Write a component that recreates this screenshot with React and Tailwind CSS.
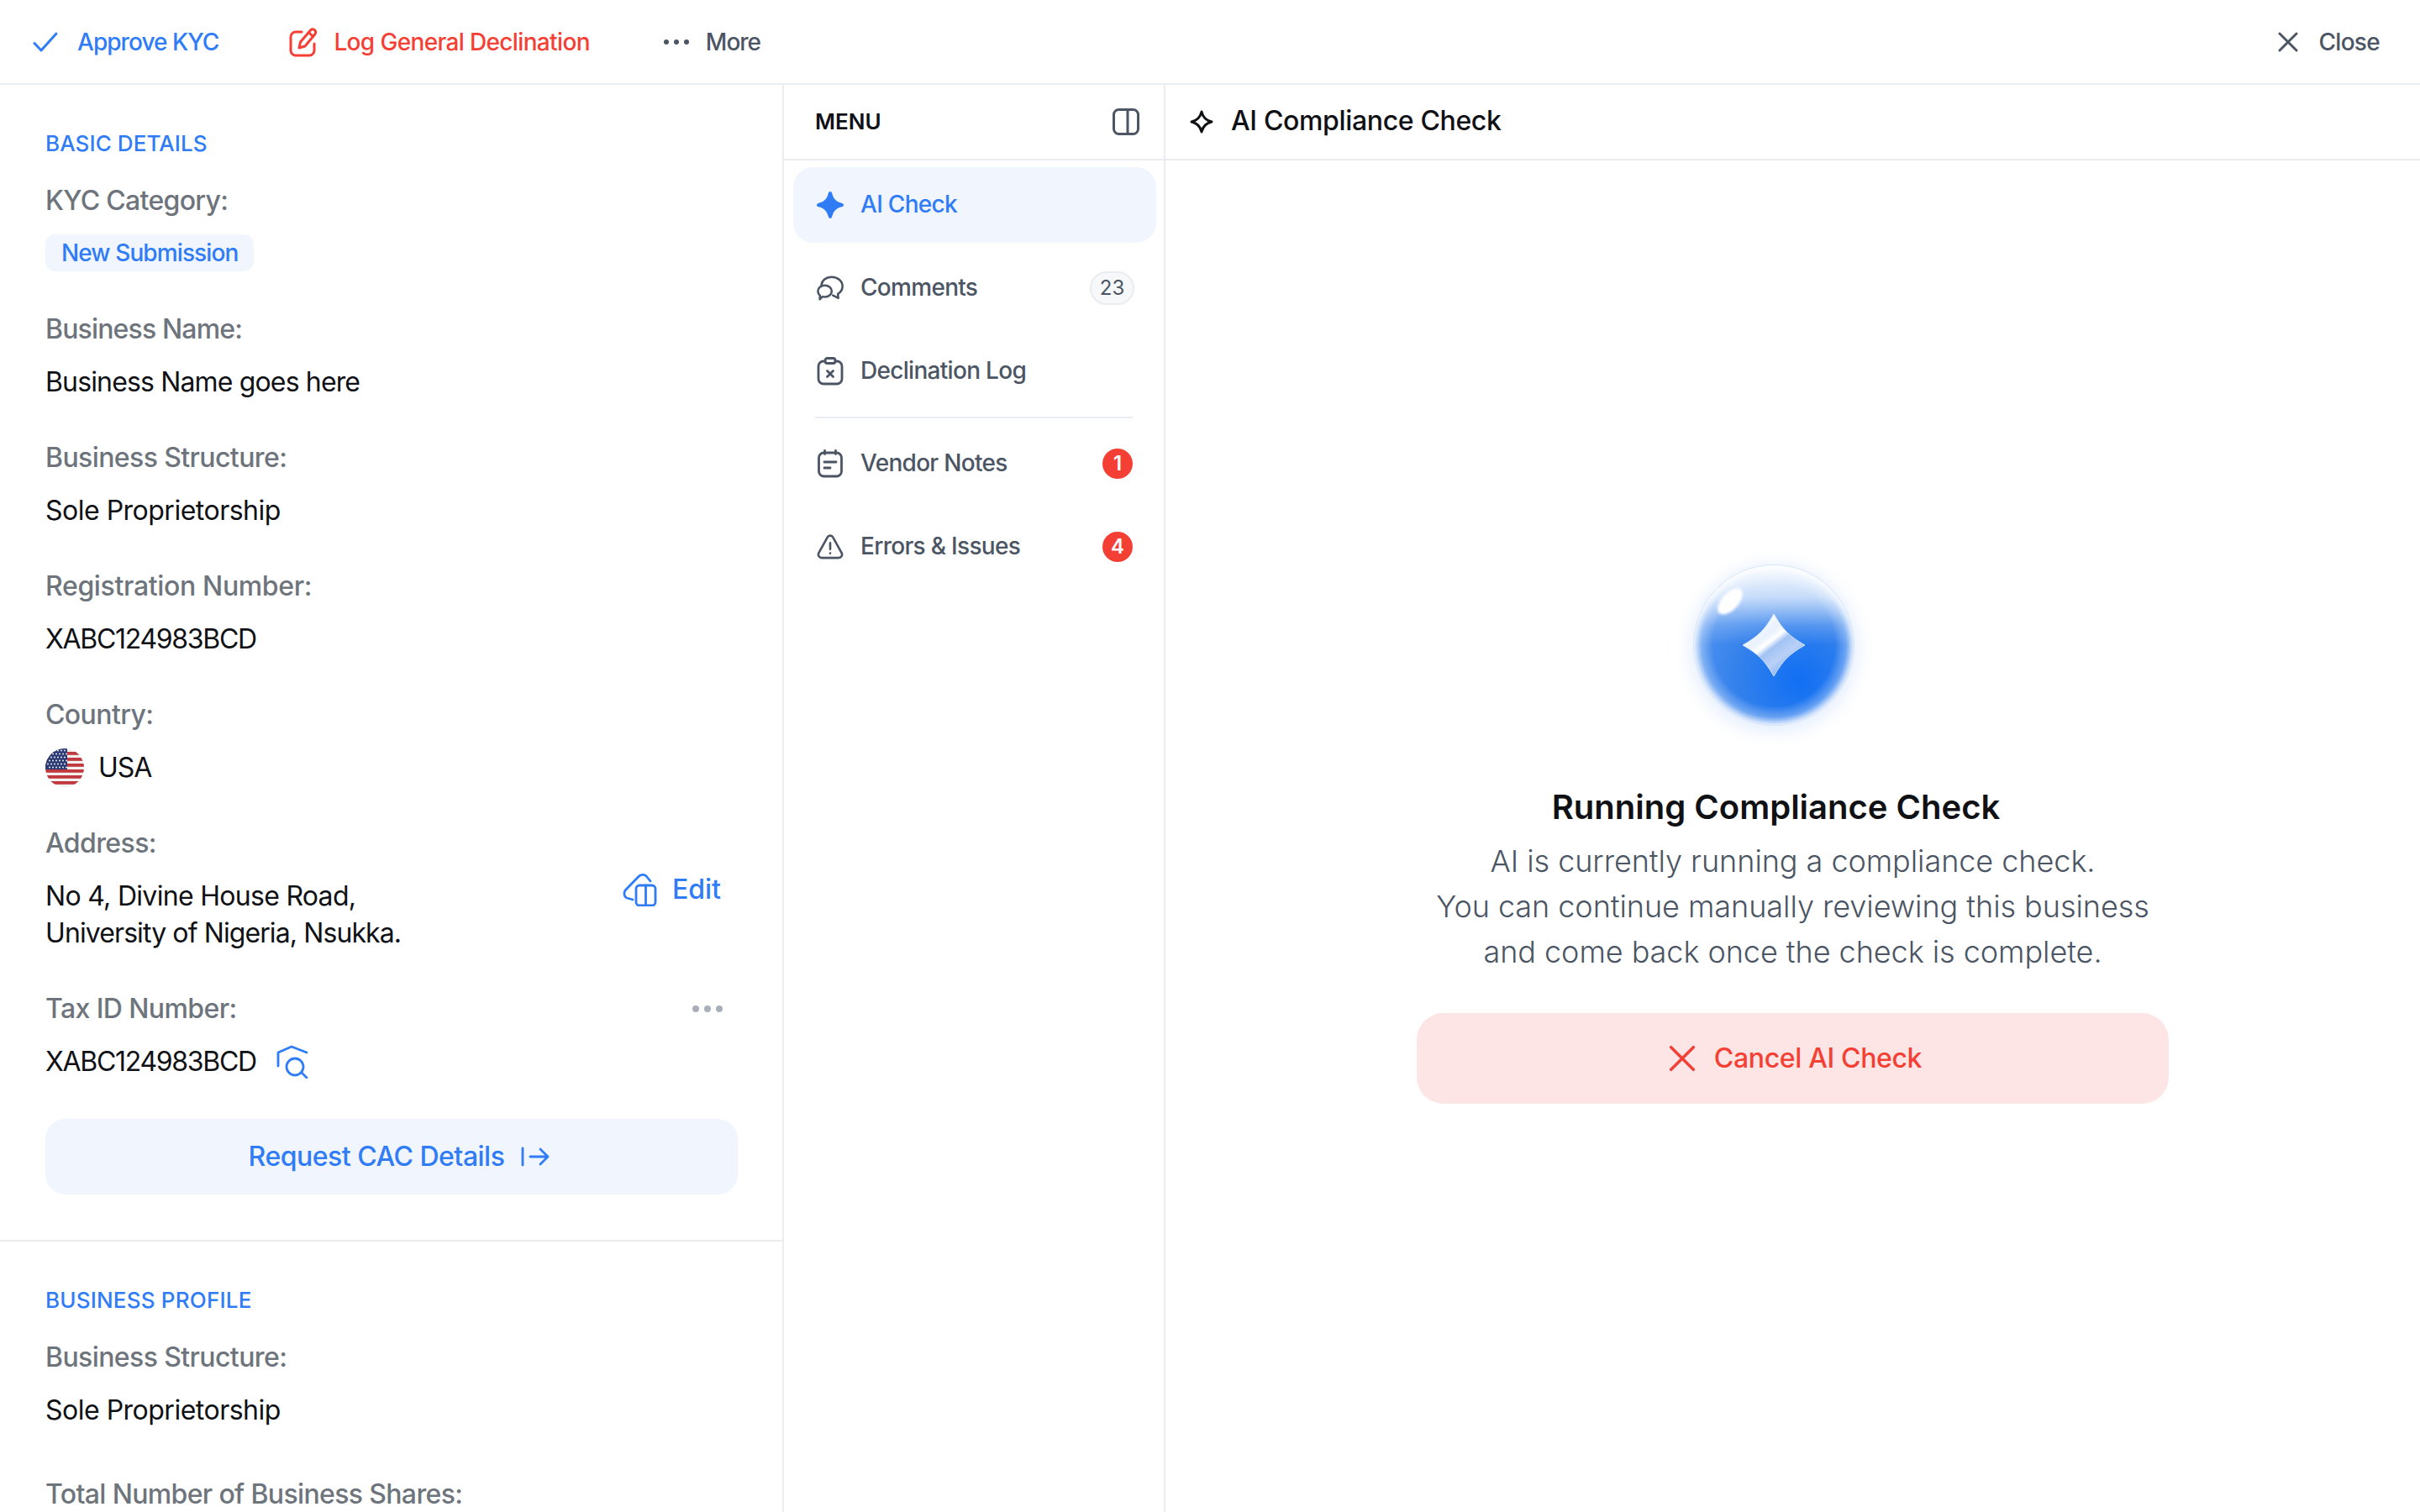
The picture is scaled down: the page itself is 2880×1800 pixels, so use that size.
import React from "react";

const rule = "border-[#e9edf2]";

function Check() {
  return (
    <svg width="32" height="32" viewBox="0 0 32 32" fill="none" stroke="#2f7cf6" strokeWidth="3" strokeLinecap="round" strokeLinejoin="round">
      <path d="M3 17.5 11 26 29 6" />
    </svg>
  );
}

function PenNote() {
  return (
    <svg width="34" height="36" viewBox="0 0 34 36" fill="none" stroke="#f43f35" strokeWidth="3" strokeLinecap="round" strokeLinejoin="round">
      <path d="M15 6H8a6 6 0 0 0-6 6v16a6 6 0 0 0 6 6h16a6 6 0 0 0 6-6v-8" />
      <path d="M26 3.5a3.6 3.6 0 0 1 5 5L19 23l-7 2 1.5-7z" />
      <path d="m23.5 6.5 5 5" />
    </svg>
  );
}

function Dots({ color = "#4b5563", size = 30, r = 3 }) {
  return (
    <svg width={size} height="10" viewBox={`0 0 ${size} 10`} fill={color}>
      <circle cx={r} cy="5" r={r} />
      <circle cx={size / 2} cy="5" r={r} />
      <circle cx={size - r} cy="5" r={r} />
    </svg>
  );
}

function Cross({ size = 24, color = "#4b5563", sw = 3 }) {
  return (
    <svg width={size} height={size} viewBox="0 0 24 24" fill="none" stroke={color} strokeWidth={sw} strokeLinecap="round">
      <path d="M2 2l20 20M22 2 2 22" />
    </svg>
  );
}

function PanelIcon() {
  return (
    <svg width="32" height="32" viewBox="0 0 32 32" fill="none" stroke="#4b5563" strokeWidth="3">
      <rect x="1.5" y="1.5" width="29" height="29" rx="6" />
      <path d="M18 2v28" />
    </svg>
  );
}

function Sparkle() {
  return (
    <svg width="32" height="32" viewBox="0 0 32 32" fill="#2f7cf6">
      <path d="M16 0c1.2 0 1.8.8 2.3 2.4 1.6 6.2 5 9.7 11.3 11.3C31.200 14.200 32 14.800 32 16s-.8 1.800-2.400 2.300c-6.300 1.600-9.700 5-11.300 11.300C17.800 31.200 17.200 32 16 32s-1.800-.8-2.300-2.400c-1.600-6.300-5-9.700-11.300-11.300C.8 17.800 0 17.200 0 16s.8-1.800 2.400-2.300c6.300-1.600 9.700-5.100 11.300-11.300C14.200.8 14.800 0 16 0z" />
    </svg>
  );
}

function Comments() {
  return (
    <svg width="35" height="34" viewBox="0 0 35 34" fill="none" stroke="#4b5563" strokeWidth="2.800" strokeLinecap="round" strokeLinejoin="round">
      <path d="M6 13.500C6.500 7 12 2.500 19.500 2.500 27.500 2.500 33.500 8 33.500 14.500c0 4-2 7.500-6 10l.5 5.500-7-3.500" />
      <path d="M10.500 13.500c5 0 9 3.400 9 7.500s-4 7.500-9 7.500c-1 0-2-.1-3-.4L4 31.500l.2-5C2.300 25 1.500 23 1.500 21c0-4.100 4-7.500 9-7.500z" />
    </svg>
  );
}

function ClipX() {
  return (
    <svg width="32" height="34" viewBox="0 0 32 34" fill="none" stroke="#4b5563" strokeWidth="2.800" strokeLinecap="round" strokeLinejoin="round">
      <path d="M10 5H8a6 6 0 0 0-6 6v15a6 6 0 0 0 6 6h16a6 6 0 0 0 6-6V11a6 6 0 0 0-6-6h-2" />
      <rect x="10" y="1.500" width="12" height="6" rx="2.500" />
      <path d="m12.500 16.500 7 7M19.500 16.500l-7 7" />
    </svg>
  );
}

function NotesIcon() {
  return (
    <svg width="32" height="34" viewBox="0 0 32 34" fill="none" stroke="#4b5563" strokeWidth="2.800" strokeLinecap="round" strokeLinejoin="round">
      <rect x="2.500" y="4" width="27" height="28" rx="6" />
      <path d="M9.500 1.500v4M22.500 1.500v4M9 15h14M9 22h7" />
    </svg>
  );
}

function AlertIcon() {
  return (
    <svg width="34" height="32" viewBox="0 0 34 32" fill="none" stroke="#4b5563" strokeWidth="2.800" strokeLinecap="round" strokeLinejoin="round">
      <path d="M13.500 4 2.600 23.500C1 26.500 3 30 6.400 30h21.200c3.400 0 5.400-3.500 3.800-6.500L20.500 4c-1.600-2.900-5.400-2.900-7 0z" />
      <path d="M17 11v8M17 24v.2" />
    </svg>
  );
}

function StarOutline() {
  return (
    <svg width="28" height="28" viewBox="0 0 28 28" fill="none" stroke="#0f1115" strokeWidth="3" strokeLinejoin="round">
      <path d="M14 2c1.500 6.500 5.500 10.500 12 12-6.500 1.500-10.500 5.500-12 12-1.500-6.500-5.500-10.500-12-12 6.500-1.500 10.500-5.500 12-12z" />
    </svg>
  );
}

function EditIcon() {
  return (
    <svg width="42" height="40" viewBox="0 0 42 40" fill="none" stroke="#2f7cf6" strokeWidth="2.800" strokeLinecap="round" strokeLinejoin="round">
      <path d="M12 32l-7-2C2 29 1 24 3 21L18 5.500C21 2 26 1 29 5l4 5" />
      <rect x="16" y="15" width="23" height="24" rx="4" />
      <path d="M27.500 15v24" />
    </svg>
  );
}

function TaxIcon() {
  return (
    <svg width="38" height="40" viewBox="0 0 38 40" fill="none" stroke="#2f7cf6" strokeWidth="2.800" strokeLinecap="round" strokeLinejoin="round">
      <path d="M2 25V9l16-7 18 7" />
      <circle cx="22" cy="26" r="10" />
      <path d="m30 33 6 6" />
    </svg>
  );
}

function ArrowIcon() {
  return (
    <svg width="34" height="26" viewBox="0 0 34 26" fill="none" stroke="#2f7cf6" strokeWidth="2.800" strokeLinecap="round" strokeLinejoin="round">
      <path d="M2 3v20M11 13h21M23 4l9 9-9 9" />
    </svg>
  );
}

function Flag() {
  const stars = [];
  for (let r = 0; r < 6; r++) {
    for (let c = 0; c < 6; c++) {
      stars.push(<circle key={`${r}-${c}`} cx={3 + c * 4 + (r % 2 ? 2 : 0)} cy={2.500 + r * 4} r="0.900" fill="#fff" />);
    }
  }
  return (
    <svg width="46" height="46" viewBox="0 0 46 46" className="shrink-0 -my-px">
      <defs>
        <clipPath id="flag-clip">
          <circle cx="23" cy="23" r="23" />
        </clipPath>
      </defs>
      <g clipPath="url(#flag-clip)">
        <rect width="46" height="46" fill="#f3f0f0" />
        {[3, 10, 17, 24, 31, 38].map((y) => (
          <rect key={y} x="0" y={y + 1} width="46" height="3.800" fill="#c0393f" />
        ))}
        <rect width="26" height="25" fill="#2b3a72" />
        {stars}
      </g>
    </svg>
  );
}

function Orb() {
  return (
    <svg width="320" height="320" viewBox="0 0 320 320">
      <defs>
        <radialGradient id="orb-base" cx="0.660" cy="0.720" r="0.800">
          <stop offset="0" stopColor="#116ff3" />
          <stop offset="0.500" stopColor="#3481ec" />
          <stop offset="1" stopColor="#5a9af0" />
        </radialGradient>
        <radialGradient id="orb-edge" cx="0.500" cy="0.500" r="0.500">
          <stop offset="0.760" stopColor="#fff" stopOpacity="0" />
          <stop offset="0.900" stopColor="#fff" stopOpacity="0.300" />
          <stop offset="1" stopColor="#fff" stopOpacity="0.900" />
        </radialGradient>
        <linearGradient id="orb-top" x1="0.500" y1="0" x2="0.500" y2="1">
          <stop offset="0" stopColor="#fff" stopOpacity="0.950" />
          <stop offset="0.200" stopColor="#fff" stopOpacity="0.700" />
          <stop offset="0.380" stopColor="#fff" stopOpacity="0.180" />
          <stop offset="0.500" stopColor="#fff" stopOpacity="0" />
        </linearGradient>
        <linearGradient id="orb-star" x1="0.150" y1="0.050" x2="0.850" y2="0.950">
          <stop offset="0" stopColor="#fff" />
          <stop offset="0.330" stopColor="#e9f1fe" />
          <stop offset="0.430" stopColor="#ffffff" />
          <stop offset="0.520" stopColor="#a3c3f5" />
          <stop offset="0.700" stopColor="#b9d1f7" />
          <stop offset="1" stopColor="#6f9fec" />
        </linearGradient>
        <filter id="orb-glow" x="-30%" y="-30%" width="160%" height="160%">
          <feGaussianBlur stdDeviation="10" />
        </filter>
        <filter id="orb-soft" x="-30%" y="-30%" width="160%" height="160%">
          <feGaussianBlur stdDeviation="1.500" />
        </filter>
      </defs>
      <circle cx="160" cy="164" r="100" fill="#2f7cf6" opacity="0.120" filter="url(#orb-glow)" />
      <circle cx="160" cy="160" r="95.500" fill="url(#orb-base)" />
      <circle cx="160" cy="160" r="95.500" fill="url(#orb-top)" />
      <circle cx="160" cy="160" r="95.500" fill="url(#orb-edge)" />
      <circle cx="160" cy="160" r="95.500" fill="none" stroke="#dbe8fb" strokeWidth="1" />
      <ellipse cx="108" cy="108" rx="19" ry="10" fill="#fff" transform="rotate(-47 108 108)" filter="url(#orb-soft)" />
      <path d="M160 123C171 142 178 149 197 160 178 171 171 178 160 197 149 178 142 171 123 160 142 149 149 142 160 123z" fill="url(#orb-star)" stroke="#e6effd" strokeWidth="0.800" />
    </svg>
  );
}

function Field({ label, children, right, track = "tracking-[-0.6px]" }) {
  return (
    <div className="flex flex-col gap-[19px]">
      <div className="flex items-center justify-between">
        <p className={`text-[32px] leading-[44px] font-medium text-[#6e747c] ${track}`}>{label}</p>
        {right}
      </div>
      {children}
    </div>
  );
}

function Value({ children, track = "tracking-[-0.7px]" }) {
  return <p className={`text-[32px] leading-[44px] text-[#0f1115] ${track}`}>{children}</p>;
}

function MenuItem({ icon, label, active, children }) {
  return (
    <div className={`h-[90px] pl-7 pr-7 flex items-center gap-5 rounded-[24px] ${active ? "bg-[#f0f5fe]" : ""}`}>
      <span className="w-8 flex justify-center shrink-0">{icon}</span>
      <span className={`flex-1 pb-[2px] text-[28px] font-medium tracking-[-0.7px] ${active ? "text-[#2f7cf6]" : "text-[#4b5563]"}`}>{label}</span>
      {children}
    </div>
  );
}

function RedBadge({ n }) {
  return (
    <span className="w-9 h-9 rounded-full bg-[#f43f35] text-white text-[24px] font-semibold flex items-center justify-center">{n}</span>
  );
}

export default function App() {
  return (
    <div className="w-full h-screen overflow-hidden bg-white flex flex-col font-[Inter,sans-serif]">
      <div className={`h-[101px] shrink-0 border-b-2 ${rule} flex items-center justify-between pl-[38px] pr-[48px]`}>
        <div className="flex items-center">
          <div className="flex items-center gap-[22px] text-[28px] font-medium text-[#2f7cf6] tracking-[-0.95px]">
            <Check />
            <span>Approve KYC</span>
          </div>
          <div className="ml-[84px] flex items-center gap-[19px] text-[28px] font-medium text-[#f43f35] tracking-[-0.65px]">
            <PenNote />
            <span>Log General Declination</span>
          </div>
          <div className="ml-[88px] flex items-center gap-5 text-[28px] font-medium text-[#4b5563] tracking-[-1px]">
            <Dots />
            <span>More</span>
          </div>
        </div>
        <div className="flex items-center gap-6 text-[28px] font-medium text-[#4b5563] tracking-[-0.7px]">
          <Cross />
          <span>Close</span>
        </div>
      </div>

      <div className="flex-1 flex min-h-0">
        <div className={`w-[933px] shrink-0 border-r-2 ${rule} overflow-hidden`}>
          <div className={`pl-[54px] pr-[53px] pt-[52px] pb-[54px] border-b-2 ${rule}`}>
            <p className="text-[26px] leading-[36px] font-medium text-[#2f7cf6] tracking-[0.1px]">BASIC DETAILS</p>
            <div className="mt-7 flex flex-col gap-[46px]">
              <Field label="KYC Category:" track="tracking-[-0.7px]">
                <span className="self-start -mt-px mb-px h-11 px-[19px] rounded-[12px] bg-[#f0f5fe] text-[28px] font-medium text-[#2f7cf6] tracking-[-0.9px] flex items-center">New Submission</span>
              </Field>
              <Field label="Business Name:" track="tracking-[-0.85px]">
                <Value track="tracking-[-0.85px]">Business Name goes here</Value>
              </Field>
              <Field label="Business Structure:">
                <Value track="tracking-[-0.5px]">Sole Proprietorship</Value>
              </Field>
              <Field label="Registration Number:" track="tracking-[-0.35px]">
                <Value track="tracking-[-1.3px]">XABC124983BCD</Value>
              </Field>
              <Field label="Country:">
                <div className="flex items-center gap-[17px]">
                  <Flag />
                  <Value track="tracking-[-1px]">USA</Value>
                </div>
              </Field>
              <Field label="Address:">
                <div className="flex items-start justify-between">
                  <Value>
                    No 4, Divine House Road,
                    <br />
                    <span className="tracking-[-0.9px]">University of Nigeria, Nsukka.</span>
                  </Value>
                  <div className="-mt-[8px] pr-5 flex items-center gap-[17px] text-[32px] leading-[44px] font-medium text-[#2f7cf6]">
                    <EditIcon />
                    <span>Edit</span>
                  </div>
                </div>
              </Field>
              <Field label="Tax ID Number:" right={<span className="mr-[18px]"><Dots color="#a9afb8" size={36} r={4} /></span>}>
                <div className="flex items-center gap-6">
                  <Value track="tracking-[-1.3px]">XABC124983BCD</Value>
                  <TaxIcon />
                </div>
              </Field>
            </div>
            <button className="mt-[46px] w-full h-[90px] pl-[18px] rounded-[24px] bg-[#f0f5fe] flex items-center justify-center gap-5 text-[32px] font-medium text-[#2f7cf6] tracking-[-0.5px]">
              <span>Request CAC Details</span>
              <ArrowIcon />
            </button>
          </div>
          <div className="pl-[54px] pr-[54px] pt-[52px]">
            <p className="text-[26px] leading-[36px] font-medium text-[#2f7cf6] tracking-[0.2px]">BUSINESS PROFILE</p>
            <div className="mt-7 flex flex-col gap-14">
              <Field label="Business Structure:">
                <Value track="tracking-[-0.5px]">Sole Proprietorship</Value>
              </Field>
              <Field label="Total Number of Business Shares:" track="tracking-[-0.65px]" />
            </div>
          </div>
        </div>

        <div className={`w-[454px] shrink-0 border-r-2 ${rule}`}>
          <div className={`h-[90px] border-b-2 ${rule} pl-[37px] pr-[29px] flex items-center justify-between`}>
            <span className="pb-[2px] text-[26px] font-semibold text-[#0f1115]">MENU</span>
            <PanelIcon />
          </div>
          <div className="pl-[11px] pr-[9px] pt-2 flex flex-col gap-[9px]">
            <MenuItem active icon={<Sparkle />} label="AI Check" />
            <MenuItem icon={<Comments />} label="Comments">
              <span className={`-mr-[2px] w-[53px] h-10 rounded-full border-2 ${rule} bg-[#f7f8fa] text-[24px] text-[#4b5563] flex items-center justify-center`}>23</span>
            </MenuItem>
            <MenuItem icon={<ClipX />} label="Declination Log" />
            <div className={`ml-[26px] mr-7 border-t-2 ${rule}`} />
            <MenuItem icon={<NotesIcon />} label="Vendor Notes">
              <RedBadge n="1" />
            </MenuItem>
            <MenuItem icon={<AlertIcon />} label="Errors & Issues">
              <RedBadge n="4" />
            </MenuItem>
          </div>
        </div>

        <div className="flex-1 flex flex-col min-w-0">
          <div className={`h-[90px] shrink-0 border-b-2 ${rule} pl-[29px] flex items-center gap-[21px]`}>
            <StarOutline />
            <span className="pb-[2px] text-[32px] font-medium text-[#0f1115] tracking-[-0.35px]">AI Compliance Check</span>
          </div>
          <div className="flex-1 flex flex-col items-center pt-[417px]">
            <div className="mr-[45px]">
              <Orb />
            </div>
            <p className="mr-[40px] text-[40px] leading-[60px] font-semibold text-[#0f1115] mt-[3px]">Running Compliance Check</p>
            <p className="mt-[7px] text-[36px] leading-[54px] font-light text-[#4b5563] text-center tracking-[-0.05px]">
              AI is currently running a compliance check.
              <br />
              You can continue manually reviewing this business
              <br />
              and come back once the check is complete.
            </p>
            <button className="mt-[46px] w-[895px] h-[108px] rounded-[32px] bg-[#fde5e5] flex items-center justify-center gap-[22px] pl-[6px] text-[32px] font-medium text-[#f43f35] tracking-[-0.35px]">
              <Cross size={32} color="#f43f35" sw={2.6} />
              <span>Cancel AI Check</span>
            </button>
          </div>
        </div>
      </div>
    </div>
  );
}
